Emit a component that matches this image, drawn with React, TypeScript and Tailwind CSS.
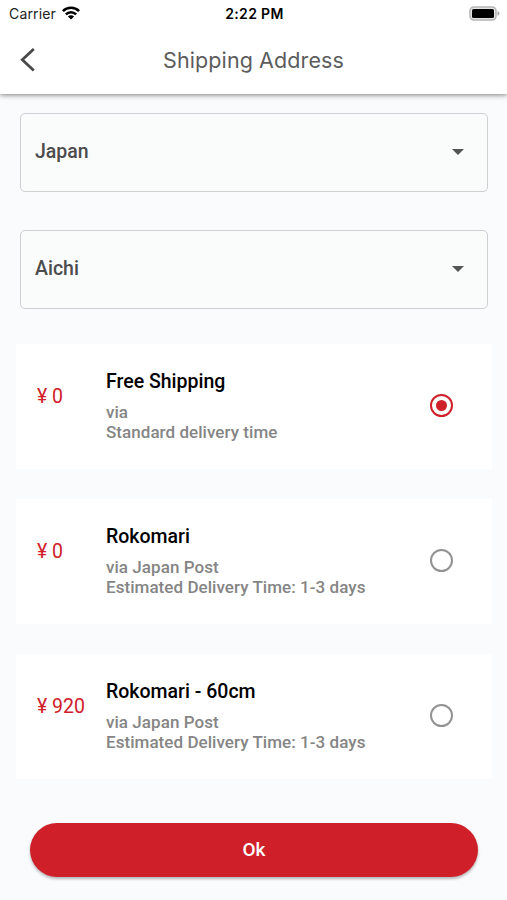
import { useState } from 'react'

interface ShippingMethod {
  id: string
  price: string
  name: string
  via: string
  time: string
}

const methods: ShippingMethod[] = [
  { id: 'free', price: '¥ 0', name: 'Free Shipping', via: 'via', time: 'Standard delivery time' },
  { id: 'rokomari', price: '¥ 0', name: 'Rokomari', via: 'via Japan Post', time: 'Estimated Delivery Time: 1-3 days' },
  { id: 'rokomari-60', price: '¥ 920', name: 'Rokomari - 60cm', via: 'via Japan Post', time: 'Estimated Delivery Time: 1-3 days' },
]

function StatusBar() {
  return (
    <div className="grid h-7 grid-cols-3 items-center pr-[7px] pl-[9px] font-['Inter',sans-serif] text-black">
      <div className="flex items-center gap-[6px]">
        <span className="text-[14px] leading-5 tracking-[0.15px] text-[#222]">Carrier</span>
        <svg className="-mt-[2px]" width="18" height="14" viewBox="0 0 18 14" fill="none" stroke="currentColor" strokeWidth="2.6">
          <path d="M0.9 5.1a11.5 11.5 0 0 1 16.2 0" />
          <path d="M3.9 8.4a7.2 7.2 0 0 1 10.2 0" />
          <path d="M9 13.6 5.9 10.5a4.4 4.4 0 0 1 6.2 0Z" fill="currentColor" stroke="none" />
        </svg>
      </div>
      <span className="text-center text-[14px] leading-5 font-semibold tracking-[0.35px]">2:22 PM</span>
      <svg className="-mt-[2px] justify-self-end" width="31" height="15" viewBox="0 0 31 15">
        <rect x="1" y="1" width="26" height="13" rx="3.8" fill="#e4e4e4" stroke="#b5b5b5" strokeWidth="1.5" />
        <rect x="3" y="3" width="22" height="9" rx="1.5" fill="#000" />
        <path d="M28.5 5v4.8q1.9-.7 1.9-2.4T28.5 5Z" fill="#a5a5a5" />
      </svg>
    </div>
  )
}

function Select({ value }: { value: string }) {
  return (
    <button className="flex h-[79px] w-full items-center justify-between rounded-[5px] border border-[#cdcfd2] bg-[#fafbfb] pr-[23px] pb-[2px] pl-[14px] text-[19.5px] font-medium text-[#4c4c4c]">
      <span className="pt-[1px]">{value}</span>
      <svg width="12" height="6" viewBox="0 0 12 6" fill="#555">
        <path d="M0 0h12L6 6Z" />
      </svg>
    </button>
  )
}

function Radio({ checked }: { checked: boolean }) {
  return (
    <span
      className={`flex size-[23px] items-center justify-center rounded-full border-2 ${
        checked ? 'border-[#cf202a]' : 'border-[#929292]'
      }`}
    >
      {checked && <span className="size-[11px] rounded-full bg-[#cf202a]" />}
    </span>
  )
}

export default function App() {
  const [selected, setSelected] = useState('free')

  return (
    <div className="flex h-[900px] w-[507px] flex-col overflow-hidden bg-[#fafbfd] font-['Roboto',sans-serif]">
      <header className="z-10 h-[94px] shrink-0 bg-white shadow-[0_1px_5px_rgba(0,0,0,0.5)]">
        <StatusBar />
        <div className="flex h-[64px] items-center pl-[20px]">
          <button aria-label="Back" className="w-10">
            <svg width="16" height="24" viewBox="0 0 16 24" fill="none" stroke="#4a4a4a" strokeWidth="2.8">
              <path d="M13.8 1 2.3 11.7 13.8 22.4" />
            </svg>
          </button>
          <h1 className="flex-1 pr-[60px] text-center font-['Inter',sans-serif] text-[21.5px] tracking-[0.1px] text-[#5c5c5c]">
            Shipping Address
          </h1>
        </div>
      </header>

      <div className="flex flex-col gap-[38px] pt-[19px] pr-[19px] pl-5">
        <Select value="Japan" />
        <Select value="Aichi" />
      </div>

      <div className="flex flex-col gap-[30px] pt-[35px] pr-[15px] pl-4">
        {methods.map((method) => (
          <div
            key={method.id}
            onClick={() => setSelected(method.id)}
            className="flex h-[125px] cursor-pointer bg-white pt-[26px] pr-[39.5px] pl-[21px]"
          >
            <div className="w-[69px] shrink-0 pt-[15px] text-[19.5px] leading-6 text-[#cf202a]">{method.price}</div>
            <div className="flex-1 font-medium">
              <p className="text-[19.5px] leading-6 text-black">{method.name}</p>
              <div className="mt-[8px] text-[17px] leading-[20px] tracking-[0.05px] text-[#858585]">
                <p>{method.via}</p>
                <p>{method.time}</p>
              </div>
            </div>
            <div className="pt-[24px]">
              <Radio checked={selected === method.id} />
            </div>
          </div>
        ))}
      </div>

      <div className="pt-[44px] pr-[29px] pl-[30px]">
        <button className="h-[54px] w-full rounded-full bg-[#cf202a] text-[19px] font-medium text-white shadow-[0_2px_3px_rgba(0,0,0,0.28)]">
          Ok
        </button>
      </div>
    </div>
  )
}
